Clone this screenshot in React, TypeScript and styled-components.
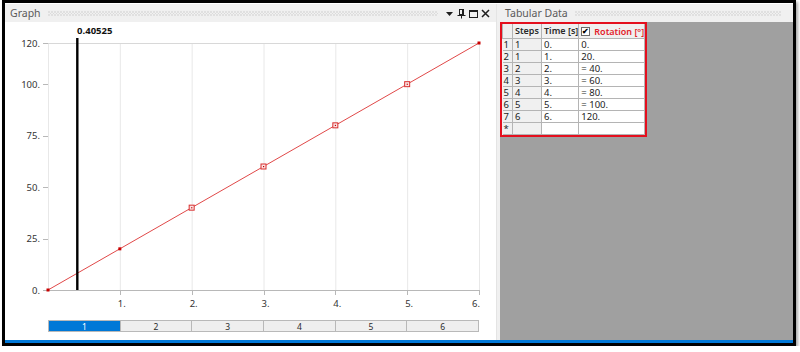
import React from 'react';
import styled, { createGlobalStyle } from 'styled-components';

const GlobalStyle = createGlobalStyle`
  html, body {
    margin: 0;
    padding: 0;
    background: #fff;
  }
  body {
    font-family: "Noto Sans", "Liberation Sans", sans-serif;
  }
`;

const Frame = styled.div`
  box-sizing: border-box;
  width: 794px;
  height: 346px;
  margin-left: 2px;
  border: 3px solid #000;
  display: flex;
  flex-direction: column;
  background: #fff;
  box-shadow: 2px 2px 3px rgba(0, 0, 0, 0.35);
`;

const Workspace = styled.div`
  flex: 1;
  display: flex;
  padding-top: 1px;
  min-height: 0;
`;

const BlueBar = styled.div`
  height: 3px;
  background: #0078d7;
`;

const Panel = styled.section<{ $width?: number }>`
  display: flex;
  flex-direction: column;
  ${(p) => (p.$width ? `width: ${p.$width}px;` : 'flex: 1;')}
`;

const Splitter = styled.div`
  width: 4px;
  background: #f0f0f0;
  border-left: 1px solid #e4e4e4;
  box-sizing: border-box;
`;

const PanelHeader = styled.header`
  height: 18px;
  display: flex;
  align-items: center;
  padding: 0 6px 0 5px;
  background: #f0f0f0;
  font-size: 10.5px;
  color: #5a5a5a;
`;

const Grip = styled.div`
  flex: 1;
  height: 5px;
  margin: 1px 6px 0 7px;
  background-image:
    radial-gradient(circle at 1px 1px, #cdcdcd 0.6px, transparent 0.8px),
    radial-gradient(circle at 2.5px 2.5px, #dadada 0.6px, transparent 0.8px);
  background-size: 3px 3px;
`;

const HeaderIcons = styled.div`
  display: flex;
  gap: 1px;
  margin-right: -1px;
`;

const IconSlot = styled.svg`
  width: 11px;
  height: 11px;
  display: block;
`;

const GraphBody = styled.div`
  flex: 1;
  background: #fff;
  display: flex;
  flex-direction: column;
`;

const Chart = styled.svg`
  display: block;
  font-family: "Noto Sans", "Liberation Sans", sans-serif;
`;

const TabStrip = styled.div`
  display: flex;
  width: 431px;
  height: 12px;
  margin: 2px 0 0 43px;
  box-sizing: border-box;
  border: 1px solid #b9b9b9;
  background: #efefef;
`;

const TabCell = styled.div<{ $active?: boolean }>`
  flex: 1;
  display: flex;
  align-items: center;
  justify-content: center;
  font-size: 8.5px;
  color: ${(p) => (p.$active ? '#fff' : '#2a2a2a')};
  background: ${(p) => (p.$active ? '#0078d7' : '#efefef')};
  & + & {
    border-left: 1px solid #b9b9b9;
  }
`;

const DataArea = styled.div`
  flex: 1;
  background: #a0a0a0;
`;

const RedBox = styled.div`
  display: inline-block;
  border: 2px solid #e4101e;
  background: #f0f0f0;
`;

const Grid = styled.table`
  border-collapse: collapse;
  table-layout: fixed;
  font-size: 9.5px;
  color: #1c1c1c;
`;

const Col = styled.col<{ $w: number }>`
  width: ${(p) => p.$w}px;
`;

const HeadCell = styled.th<{ $red?: boolean }>`
  height: 13px;
  padding: 0 0 0 2px;
  border: 1px solid #b4b4b4;
  border-top: none;
  background: #f0f0f0;
  font-weight: 600;
  font-size: 9px;
  text-align: left;
  white-space: nowrap;
  overflow: hidden;
  color: ${(p) => (p.$red ? '#e3202a' : '#2a2a2a')};
  line-height: 13px;
`;

const Cell = styled.td<{ $shade?: boolean }>`
  height: 11px;
  padding: 0 0 0 2px;
  border: 1px solid #b4b4b4;
  background: ${(p) => (p.$shade ? '#f0f0f0' : '#fff')};
  line-height: 11px;
  white-space: nowrap;
  overflow: hidden;
`;

const RowHead = styled(Cell)`
  padding-left: 1px;
  border-left: none;
  background: #f0f0f0;
`;

const HeadInner = styled.span`
  display: inline-flex;
  align-items: center;
  gap: 4px;
`;

const CheckBox = styled.span`
  width: 9px;
  height: 9px;
  box-sizing: border-box;
  border: 1px solid #6a6a6a;
  background: #fff;
  display: inline-flex;
  align-items: center;
  justify-content: center;
  font-size: 8px;
  line-height: 1;
  color: #000;
  font-weight: 700;
`;

// chart scale
const X0 = 43;
const XS = 431 / 6;
const Y0 = 268;
const YS = 247 / 120;
const px = (v: number) => X0 + v * XS;
const py = (v: number) => Y0 - v * YS;

const points = [
  { t: 0, r: 0, ramp: false },
  { t: 1, r: 20, ramp: false },
  { t: 2, r: 40, ramp: true },
  { t: 3, r: 60, ramp: true },
  { t: 4, r: 80, ramp: true },
  { t: 5, r: 100, ramp: true },
  { t: 6, r: 120, ramp: false },
];

const rows = [
  { step: '1', time: '0.', rot: '0.' },
  { step: '1', time: '1.', rot: '20.' },
  { step: '2', time: '2.', rot: '= 40.' },
  { step: '3', time: '3.', rot: '= 60.' },
  { step: '4', time: '4.', rot: '= 80.' },
  { step: '5', time: '5.', rot: '= 100.' },
  { step: '6', time: '6.', rot: '120.' },
];

const cursor = 0.40525;

const WindowIcons = () => (
  <HeaderIcons>
    <IconSlot viewBox="0 0 11 11">
      <path d="M2 4 H9 L5.5 8 Z" fill="#1e1e1e" />
    </IconSlot>
    <IconSlot viewBox="0 0 11 11">
      <rect x="3.5" y="1.5" width="4" height="5" fill="none" stroke="#1e1e1e" />
      <rect x="6" y="1" width="2" height="6" fill="#1e1e1e" />
      <path d="M1.5 7.5 H9.5 M5.5 7.5 V10.5" stroke="#1e1e1e" />
    </IconSlot>
    <IconSlot viewBox="0 0 11 11">
      <rect x="1.5" y="2.5" width="8" height="7" fill="none" stroke="#1e1e1e" />
      <path d="M1.5 3.5 H9.5" stroke="#1e1e1e" />
    </IconSlot>
    <IconSlot viewBox="0 0 11 11">
      <path d="M2 2 L9 9 M9 2 L2 9" stroke="#1e1e1e" strokeWidth="1.5" />
    </IconSlot>
  </HeaderIcons>
);

const RotationChart = () => {
  const yTicks = [0, 25, 50, 75, 100, 120];
  const xTicks = [1, 2, 3, 4, 5, 6];
  const cx = px(cursor);
  return (
    <Chart width={491} height={296} viewBox="0 0 491 296">
      {[0, ...xTicks].map((t) => (
        <line key={`g${t}`} x1={px(t) + 0.5} x2={px(t) + 0.5} y1={py(120)} y2={Y0} stroke="#e8e8e8" />
      ))}
      <line x1={X0 - 4} x2={px(6)} y1={py(120) + 0.5} y2={py(120) + 0.5} stroke="#d8d8d8" />
      <line x1={X0} x2={px(6) + 1} y1={Y0 + 0.5} y2={Y0 + 0.5} stroke="#b8b8b8" />
      {yTicks.map((v) => (
        <g key={`y${v}`}>
          <line x1={X0 - 5} x2={X0} y1={Math.round(py(v)) + 0.5} y2={Math.round(py(v)) + 0.5} stroke="#b8b8b8" />
          <text x={X0 - 8} y={py(v) + 3.5} textAnchor="end" fontSize="9.5" fill="#333">
            {v}.
          </text>
        </g>
      ))}
      {xTicks.map((v) => (
        <g key={`x${v}`}>
          <line x1={Math.round(px(v)) + 0.5} x2={Math.round(px(v)) + 0.5} y1={Y0} y2={Y0 + 5} stroke="#b8b8b8" />
          <text
            x={v === 6 ? px(v) + 1 : px(v) - 2}
            y={Y0 + 17}
            textAnchor={v === 6 ? 'end' : 'start'}
            fontSize="9.5"
            fill="#333"
          >
            {v}.
          </text>
        </g>
      ))}
      <line x1={px(0)} y1={py(0)} x2={px(6)} y2={py(120)} stroke="#e04848" strokeWidth="1" />
      {points.map((p) =>
        p.ramp ? (
          <g key={`m${p.t}`}>
            <rect x={px(p.t) - 2.5} y={py(p.r) - 2.5} width="5" height="5" fill="#fbe3e3" stroke="#d83030" strokeWidth="1" />
            <rect x={px(p.t) - 0.5} y={py(p.r) - 0.5} width="1.2" height="1.2" fill="#c00000" />
          </g>
        ) : (
          <rect key={`m${p.t}`} x={px(p.t) - 1.5} y={py(p.r) - 1.5} width="3" height="3" fill="#c80000" />
        )
      )}
      <rect x={cx - 1} y={16} width="2.4" height={Y0 - 16} fill="#000" />
      <text x={cx} y={12} fontSize="9.5" fontWeight="700" fill="#111">
        {cursor}
      </text>
    </Chart>
  );
};

const TabularData = () => (
  <RedBox>
    <Grid>
      <colgroup>
        <Col $w={10} />
        <Col $w={29} />
        <Col $w={37} />
        <Col $w={64} />
      </colgroup>
      <thead>
        <tr>
          <HeadCell />
          <HeadCell>Steps</HeadCell>
          <HeadCell>Time [s]</HeadCell>
          <HeadCell $red>
            <HeadInner>
              <CheckBox>✔</CheckBox>
              Rotation [°]
            </HeadInner>
          </HeadCell>
        </tr>
      </thead>
      <tbody>
        {rows.map((r, i) => (
          <tr key={i}>
            <RowHead>{i + 1}</RowHead>
            <Cell $shade>{r.step}</Cell>
            <Cell>{r.time}</Cell>
            <Cell>{r.rot}</Cell>
          </tr>
        ))}
        <tr>
          <RowHead>*</RowHead>
          <Cell $shade />
          <Cell />
          <Cell />
        </tr>
      </tbody>
    </Grid>
  </RedBox>
);

const App = () => (
  <>
    <GlobalStyle />
    <Frame>
      <Workspace>
        <Panel $width={491}>
          <PanelHeader>
            Graph
            <Grip />
            <WindowIcons />
          </PanelHeader>
          <GraphBody>
            <RotationChart />
            <TabStrip>
              {[1, 2, 3, 4, 5, 6].map((n) => (
                <TabCell key={n} $active={n === 1}>
                  {n}
                </TabCell>
              ))}
            </TabStrip>
          </GraphBody>
        </Panel>
        <Splitter />
        <Panel>
          <PanelHeader>
            Tabular Data
            <Grip />
          </PanelHeader>
          <DataArea>
            <TabularData />
          </DataArea>
        </Panel>
      </Workspace>
      <BlueBar />
    </Frame>
  </>
);

export default App;
